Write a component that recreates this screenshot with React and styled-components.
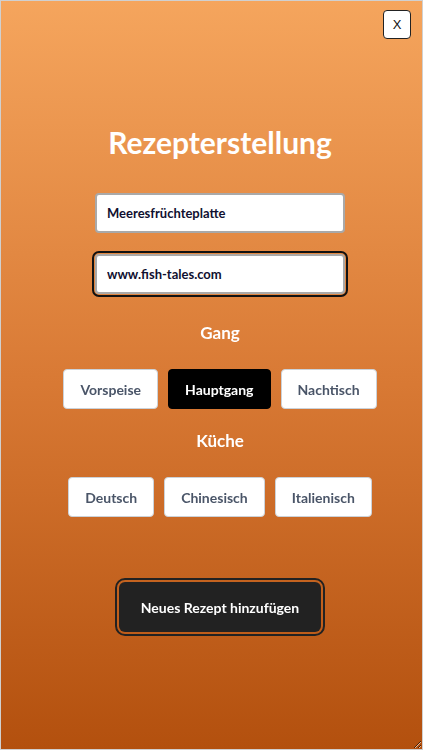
import React, { useState, useEffect, useRef } from 'react';
import styled, { createGlobalStyle } from 'styled-components';

const GlobalStyle = createGlobalStyle`
    html, body {
        margin: 0;
        padding: 0;
    }
    body {
        font-family: Lato, "Open Sans", "Liberation Sans", sans-serif;
    }
`

const Container = styled.div`
    position: relative;
    box-sizing: border-box;
    width: 423px;
    height: 750px;
    border: 1px solid #d0d0d0;
    background: linear-gradient(to bottom, #f5a55d 0%, #d97a35 50%, #b3500e 100%);
    display: flex;
    flex-direction: column;
    align-items: center;
    padding: 122px 0 0 17px;
    overflow: auto;
    resize: both;
`

const CloseButton = styled.button`
    position: absolute;
    top: 9px;
    right: 11px;
    width: 28px;
    height: 29px;
    background: #fff;
    border: 1px solid #222;
    border-radius: 4px;
    font-family: "Liberation Sans", sans-serif;
    font-size: 13px;
    color: #111;
    padding: 0;
    cursor: pointer;
`

const Title = styled.h1`
    margin: 0 0 32px;
    font-size: 30px;
    font-weight: 700;
    color: #fff;
    line-height: 38px;
`

const Input = styled.input`
    box-sizing: border-box;
    width: 250px;
    height: 40px;
    border: 2px solid #a9a9a9;
    border-radius: 4px;
    padding: 0 10px;
    font-family: inherit;
    font-size: 13px;
    font-weight: 700;
    color: #101030;
    caret-color: #000;
    background: #fff;
    margin-bottom: ${props => props.last ? '0' : '21px'};
    outline: none;

    &:focus {
        outline: 2px solid #111;
        outline-offset: 1px;
    }
`

const Label = styled.h2`
    margin: ${props => props.first ? '28px' : '21px'} 0 0;
    font-size: 17px;
    font-weight: 700;
    color: #fff;
    line-height: 22px;
`

const Row = styled.div`
    display: flex;
    gap: 10px;
    margin-top: 25px;
`

const Choice = styled.button`
    box-sizing: border-box;
    height: 40px;
    padding: 0 16px;
    border: 1px solid ${props => props.active ? '#000' : '#cbd2d9'};
    border-radius: 4px;
    background: ${props => props.active ? '#000' : '#fff'};
    color: ${props => props.active ? '#fff' : '#4a5568'};
    font-family: inherit;
    font-size: 14px;
    font-weight: 700;
    cursor: pointer;
`

const Submit = styled.button`
    margin-top: 65px;
    box-sizing: border-box;
    width: 202px;
    height: 50px;
    border: none;
    border-radius: 6px;
    background: #222;
    color: #fff;
    font-family: inherit;
    font-size: 14px;
    font-weight: 700;
    outline: 2px solid #222;
    outline-offset: 2px;
    cursor: pointer;
`

const courses = ['Vorspeise', 'Hauptgang', 'Nachtisch'];
const cuisines = ['Deutsch', 'Chinesisch', 'Italienisch'];

const App = () => {
    const [course, setCourse] = useState('Hauptgang');
    const [cuisine, setCuisine] = useState(null);
    const [name, setName] = useState('Meeresfrüchteplatte');
    const [url, setUrl] = useState('www.fish-tales.com');
    const urlRef = useRef(null);

    useEffect(() => {
        const el = urlRef.current;
        if (el) {
            el.focus();
            el.setSelectionRange(el.value.length, el.value.length);
        }
    }, []);

    return (
        <>
            <GlobalStyle />
            <Container>
                <CloseButton>X</CloseButton>
                <Title>Rezepterstellung</Title>
                <Input value={name} onChange={e => setName(e.target.value)} />
                <Input last ref={urlRef} value={url} onChange={e => setUrl(e.target.value)} />
                <Label first>Gang</Label>
                <Row>
                    {courses.map(c => (
                        <Choice key={c} active={course === c} onClick={() => setCourse(c)}>{c}</Choice>
                    ))}
                </Row>
                <Label>Küche</Label>
                <Row>
                    {cuisines.map(c => (
                        <Choice key={c} active={cuisine === c} onClick={() => setCuisine(c)}>{c}</Choice>
                    ))}
                </Row>
                <Submit>Neues Rezept hinzufügen</Submit>
            </Container>
        </>
    );
};

export default App;
